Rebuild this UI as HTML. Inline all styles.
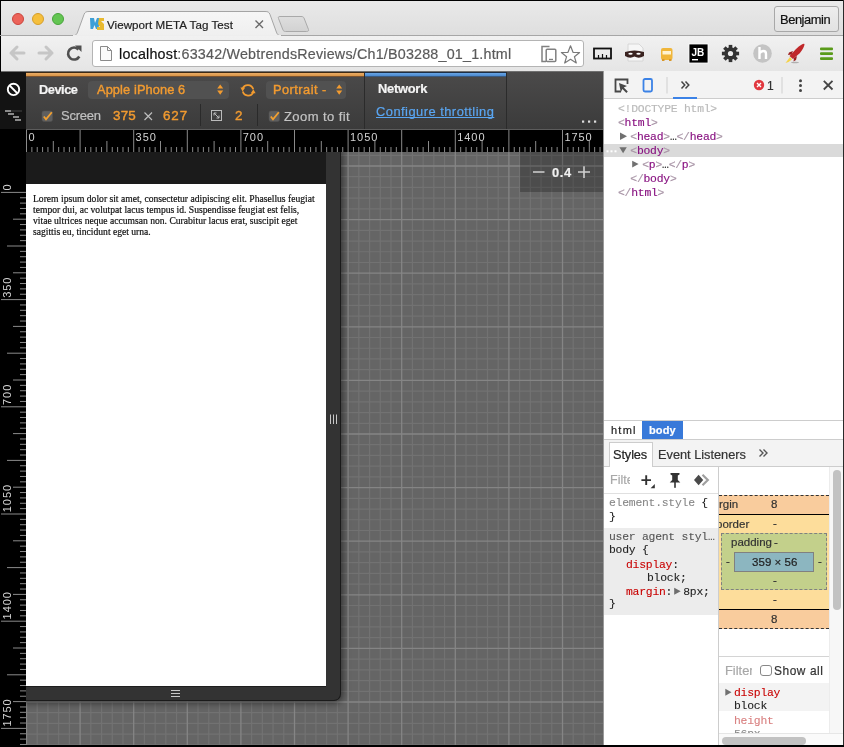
<!DOCTYPE html>
<html><head><meta charset="utf-8">
<style>
*{box-sizing:border-box;margin:0;padding:0}
html,body{width:844px;height:747px;overflow:hidden;background:#000;font-family:"Liberation Sans",sans-serif}
.a{position:absolute}
#tabstrip{left:1px;top:1px;width:842px;height:35px;background:linear-gradient(#e9e9e9,#dedede)}
#toolbar{left:1px;top:36px;width:842px;height:36px;background:linear-gradient(#f1f1f1,#e5e5e5);border-bottom:1px solid #707070}
.tl{width:12px;height:12px;border-radius:50%}
#url{left:92px;top:40px;width:492px;height:27px;background:#fff;border:1px solid #b4b4b4;border-radius:3px}
#devbar{left:26px;top:72px;width:577px;height:57px;background:linear-gradient(#4b4a4a,#3b3b3b)}
#leftstrip{left:0;top:72px;width:26px;height:57px;background:#131313}
#hruler{left:26px;top:129px;width:577px;height:23px;background:#000;border-top:1px solid #5a5a5a}
#vruler{left:0;top:129px;width:26px;height:617px;background:#000}
#canvas{left:26px;top:152px;width:578px;height:594px;background:#666}
#devtools{left:603px;top:71px;width:240px;height:675px;background:#fff;border-left:1px solid #888}
.mono{font-family:"Liberation Mono",monospace}
.nw{white-space:nowrap}
svg,div{will-change:transform}
body{-webkit-text-stroke-width:0.2px}
</style></head><body>
<!-- TAB STRIP -->
<div class="a" id="tabstrip"></div>
<svg class="a" style="left:0;top:0" width="844" height="72">
  <line x1="0" y1="35.5" x2="844" y2="35.5" stroke="#a6a6a6" stroke-width="1"/>
  <path d="M72 36 C76 36 77 34 78 31 L84 14.5 C85 12 86 11.5 89 11.5 L265 11.5 C268 11.5 269 12 270 14.5 L276 31 C277 34 278 36 282 36 Z" fill="url(#tabg)" stroke="#a4a4a4" stroke-width="1"/>
  <rect x="73" y="35" width="208" height="2" fill="#eeeeee"/>
  <defs>
    <linearGradient id="tabg" x1="0" y1="0" x2="0" y2="1"><stop offset="0" stop-color="#f6f6f6"/><stop offset="1" stop-color="#efefef"/></linearGradient>
    <linearGradient id="ntg" x1="0" y1="0" x2="0" y2="1"><stop offset="0" stop-color="#dedede"/><stop offset="1" stop-color="#d2d2d2"/></linearGradient>
  </defs>
  <path d="M280 16.5 L301 16.5 C303 16.5 303.5 17 304 18 L308.5 29.5 C309 31 308 31.5 306.5 31.5 L285.5 31.5 C284 31.5 283.5 31 283 30 L278.5 18.5 C278 17 278.5 16.5 280 16.5 Z" fill="url(#ntg)" stroke="#a9a9a9" stroke-width="1"/>
</svg>
<div class="a tl" style="left:12px;top:13px;background:#ec6359;border:1px solid #c9443c"></div>
<div class="a tl" style="left:32px;top:13px;background:#f5bf3c;border:1px solid #d49d2a"></div>
<div class="a tl" style="left:52px;top:13px;background:#63c552;border:1px solid #47a23b"></div>
<!-- favicon -->
<svg class="a" style="left:89px;top:17px" width="17" height="14">
  <path d="M1 1 L5 1 L6 6 L8 1 L11 1 L9.5 12 L7 12 L5.5 8 L4 12 L1.5 12 Z" fill="#3d9fd6"/>
  <path d="M10 1 L15 1 L15 4 L12 4 L15 7 L15 13 L8 13 L8 10 L11 10 L9 7 Z" fill="#e8b92f"/>
</svg>
<div class="a nw" style="left:107.2px;top:17.5px;font-size:11.6px;letter-spacing:0.05px;color:#222">Viewport META Tag Test</div>
<svg class="a" style="left:254px;top:19px" width="11" height="11"><path d="M1.5 1.5 L9 9 M9 1.5 L1.5 9" stroke="#6a6a6a" stroke-width="1.4"/></svg>
<div class="a" style="left:774px;top:6px;width:65px;height:26px;border:1px solid #a8a8a8;border-radius:3px;background:linear-gradient(#ededed,#e2e2e2)"></div>
<div class="a nw" style="left:780.4px;top:11.9px;font-size:12.9px;letter-spacing:-0.44px;color:#111">Benjamin</div>
<!-- TOOLBAR -->
<div class="a" id="toolbar"></div>
<svg class="a" style="left:0;top:36px" width="90" height="35">
  <path d="M11 17 L24 17 M17 11 L11 17 L17 23" stroke="#c6c6c6" stroke-width="3" fill="none" stroke-linecap="round" stroke-linejoin="round"/>
  <path d="M39 17 L52 17 M46 11 L52 17 L46 23" stroke="#c6c6c6" stroke-width="3" fill="none" stroke-linecap="round" stroke-linejoin="round"/>
  <path d="M78.5 13.5 A6 6 0 1 0 79.3 20.5" stroke="#505050" stroke-width="2.6" fill="none"/>
  <path d="M75 9.5 L81.5 9.5 L81.5 16 Z" fill="#505050"/>
</svg>
<div class="a" id="url"></div>
<svg class="a" style="left:98px;top:45px" width="16" height="17">
  <path d="M2.5 1.5 L9.5 1.5 L13.5 5.5 L13.5 15.5 L2.5 15.5 Z" fill="#fafafa" stroke="#8a8a8a" stroke-width="1"/>
  <path d="M9.5 1.5 L9.5 5.5 L13.5 5.5" fill="none" stroke="#8a8a8a" stroke-width="1"/>
</svg>
<div class="a" style="left:118.6px;top:46px;font-size:14.3px;letter-spacing:0.21px;color:#5a5a5a;white-space:nowrap"><span style="color:#111">localhost</span>:63342/WebtrendsReviews/Ch1/B03288_01_1.html</div>
<svg class="a" style="left:538px;top:44px" width="45" height="20">
  <path d="M11.5 2.5 L4 2.5 L4 17.5 L8 17.5" fill="none" stroke="#808080" stroke-width="1.5"/>
  <rect x="8.2" y="5.2" width="9.6" height="12.3" rx="1" fill="none" stroke="#808080" stroke-width="1.5"/>
  <rect x="11" y="14.8" width="4" height="1.2" fill="#808080"/>
  <path d="M32.5 1.8 L35 8.3 L41.6 8.5 L36.4 12.7 L38.3 19 L32.5 15.3 L26.7 19 L28.6 12.7 L23.4 8.5 L30 8.3 Z" fill="none" stroke="#7a7a7a" stroke-width="1.2" stroke-linejoin="round"/>
</svg>
<!-- extension icons -->
<svg class="a" style="left:590px;top:40px" width="254" height="30">
  <!-- ruler -->
  <rect x="4" y="8.5" width="17" height="10" fill="none" stroke="#111" stroke-width="1.8"/>
  <path d="M8.5 18 L8.5 15 M12.5 18 L12.5 14 M16.5 18 L16.5 15" stroke="#111" stroke-width="1.2"/>
  <!-- mask page -->
  <path d="M38 4 L49 4 L53 8 L53 21 L38 21 Z" fill="#f6f6f6" stroke="#d0d0d0" stroke-width="0.8"/>
  <path d="M35 12 Q44.5 9 54 12 L54 16 Q49 19 44.5 16.5 Q40 19 35 16 Z" fill="#3a2320"/>
  <ellipse cx="40.5" cy="13.8" rx="2.2" ry="1" fill="#fff"/>
  <ellipse cx="48.5" cy="13.8" rx="2.2" ry="1" fill="#fff"/>
  <!-- bus -->
  <rect x="71" y="8" width="11.5" height="12" rx="2" fill="#f0b63a"/>
  <rect x="72.5" y="11" width="8.5" height="3.5" fill="#fff3d0"/>
  <rect x="72" y="19" width="2.5" height="2" fill="#d9982a"/>
  <rect x="79" y="19" width="2.5" height="2" fill="#d9982a"/>
  <!-- JB -->
  <rect x="99" y="4" width="19" height="19" fill="#000" stroke="#fff" stroke-width="0.8"/>
  <text x="101.5" y="15.5" font-family="Liberation Sans" font-weight="bold" font-size="10" fill="#fff">JB</text>
  <rect x="102" y="19" width="6" height="1.4" fill="#fff"/>
  <!-- gear -->
  <g transform="translate(140.5 13.5)" fill="#333">
    <circle r="6.2"/>
    <rect x="-1.8" y="-8.6" width="3.6" height="17.2"/>
    <rect x="-1.8" y="-8.6" width="3.6" height="17.2" transform="rotate(45)"/>
    <rect x="-1.8" y="-8.6" width="3.6" height="17.2" transform="rotate(90)"/>
    <rect x="-1.8" y="-8.6" width="3.6" height="17.2" transform="rotate(135)"/>
    <circle r="2.6" fill="#ececec"/>
  </g>
  <!-- h -->
  <circle cx="172.5" cy="13.5" r="9.3" fill="#c4c4c4"/>
  <path d="M169.5 7 L169.5 19 M169.5 13.5 Q171 11 173.5 11 Q176 11 176 14 L176 19" stroke="#fff" stroke-width="2.4" fill="none"/>
  <!-- rocket -->
  <path d="M211 5 Q214 3 214.5 4 Q214.5 7 210 13 L203 19 L199.5 16 L206 9 Q209 6 211 5 Z" fill="#c0282a"/>
  <path d="M203 11 L199 12.5 L198 15 L201.5 14.5 Z M207 16 L206 20 L203.5 21.5 L204 18 Z" fill="#9c1e20"/>
  <path d="M200 17 L197 21 L195.5 23 L198.5 22 L202 19.5 Z" fill="#f5d34a"/>
  <ellipse cx="205" cy="22.5" rx="4" ry="0.8" fill="#8a8a8a" opacity="0.6"/>
  <!-- hamburger -->
  <rect x="230" y="7.5" width="13" height="2.8" rx="1" fill="#5a9b1a"/>
  <rect x="230" y="12.3" width="13" height="2.8" rx="1" fill="#5a9b1a"/>
  <rect x="230" y="17.2" width="13" height="2.8" rx="1" fill="#5a9b1a"/>
</svg>
<div class="a" id="leftstrip"></div>
<div class="a" id="devbar"></div>
<div class="a" style="left:26px;top:72px;width:338px;height:1px;background:#3d2a15"></div>
<div class="a" style="left:26px;top:73px;width:338px;height:3px;background:linear-gradient(#eaad68,#d99445)"></div>
<div class="a" style="left:26px;top:76px;width:338px;height:1px;background:#7a5230"></div>
<div class="a" style="left:365px;top:72px;width:141px;height:1px;background:#1d2f45"></div>
<div class="a" style="left:365px;top:73px;width:141px;height:3px;background:linear-gradient(#6aa6e6,#4a89cf)"></div>
<div class="a" style="left:365px;top:76px;width:141px;height:1px;background:#3a5a80"></div>
<div class="a" style="left:364px;top:72px;width:1px;height:57px;background:#2b2b2b"></div>
<div class="a" style="left:506px;top:72px;width:1px;height:57px;background:#2b2b2b"></div>
<svg class="a" style="left:0;top:72px" width="26" height="57">
  <circle cx="13.5" cy="17.4" r="5.7" fill="none" stroke="#fff" stroke-width="1.9"/>
  <path d="M9.6 13.5 L17.4 21.3" stroke="#fff" stroke-width="1.9"/>
  <rect x="11" y="38.2" width="11" height="1.6" fill="#333"/>
  <rect x="5" y="38.2" width="6" height="1.6" fill="#a8a8a8"/>
  <rect x="8" y="41.2" width="6" height="1.6" fill="#a8a8a8"/>
  <rect x="13" y="44.2" width="6" height="1.6" fill="#a8a8a8"/>
  <rect x="15" y="47.2" width="6" height="1.6" fill="#a8a8a8"/>
</svg>
<div class="a nw" style="left:38.5px;top:81.9px;font-size:12.8px;letter-spacing:-0.47px;font-weight:bold;color:#f4f4f4">Device</div>
<div class="a" style="left:88px;top:81px;width:141px;height:17.5px;border-radius:4px;background:#515151"></div>
<div class="a nw" style="left:97.2px;top:81.9px;font-size:12.8px;letter-spacing:0.11px;color:#f29b30;-webkit-text-stroke:0.4px #f29b30">Apple iPhone 6</div>
<svg class="a" style="left:215px;top:84px" width="10" height="13">
  <path d="M2.2 4.6 L5.2 0.6 L8.2 4.6 Z M2.2 6.5 L5.2 10.8 L8.2 6.5 Z" fill="#f29b30"/>
</svg>
<svg class="a" style="left:240px;top:83px" width="16" height="15">
  <path d="M2.6 5.8 A5.6 5.6 0 0 1 13.2 6.2" fill="none" stroke="#f29b30" stroke-width="1.8"/>
  <path d="M13.4 9 A5.6 5.6 0 0 1 2.8 8.6" fill="none" stroke="#f29b30" stroke-width="1.8"/>
  <path d="M0.4 4.6 L5.2 4.6 L2.6 8.6 Z" fill="#f29b30"/>
  <path d="M15.6 10.2 L10.8 10.2 L13.4 6.2 Z" fill="#f29b30"/>
</svg>
<div class="a" style="left:265.5px;top:81px;width:80px;height:17.5px;border-radius:4px;background:#515151"></div>
<div class="a nw" style="left:273.4px;top:82px;font-size:12.8px;letter-spacing:0.47px;color:#f29b30;-webkit-text-stroke:0.4px #f29b30">Portrait -</div>
<svg class="a" style="left:334px;top:84px" width="10" height="13">
  <path d="M2.2 4.6 L5.2 0.6 L8.2 4.6 Z M2.2 6.5 L5.2 10.8 L8.2 6.5 Z" fill="#f29b30"/>
</svg>
<!-- row 2 -->
<svg class="a" style="left:41px;top:110px" width="13" height="13">
  <rect x="1" y="1" width="10.5" height="10.5" rx="2" fill="#5f5f5f" stroke="#555" stroke-width="0.5"/>
  <path d="M2.8 6.5 L5 9.3 L10.8 2.3" fill="none" stroke="#f2a030" stroke-width="1.8"/>
</svg>
<div class="a nw" style="left:61px;top:107.9px;font-size:13px;letter-spacing:-0.23px;color:#c0c0c0;-webkit-text-stroke:0.2px #c0c0c0">Screen</div>
<div class="a nw" style="left:113.2px;top:108px;font-size:13.4px;letter-spacing:0.2px;color:#f29b30;-webkit-text-stroke:0.4px #f29b30">375</div>
<svg class="a" style="left:143px;top:111px" width="11" height="11"><path d="M1.5 1.5 L9 9 M9 1.5 L1.5 9" stroke="#bdbdbd" stroke-width="1.2"/></svg>
<div class="a nw" style="left:162.8px;top:108px;font-size:13.4px;letter-spacing:0.9px;color:#f29b30;-webkit-text-stroke:0.4px #f29b30">627</div>
<div class="a" style="left:200px;top:104px;width:1px;height:22px;background:#2a2a2a"></div>
<svg class="a" style="left:210px;top:109px" width="14" height="13">
  <rect x="1.5" y="1.5" width="10" height="10" fill="none" stroke="#bbb" stroke-width="1"/>
  <path d="M4 4 L9 9 M4 4 L4 6.5 M4 4 L6.5 4 M9 9 L9 6.5 M9 9 L6.5 9" stroke="#bbb" stroke-width="1"/>
</svg>
<div class="a nw" style="left:234.5px;top:108px;font-size:13.4px;color:#f29b30;-webkit-text-stroke:0.4px #f29b30">2</div>
<div class="a" style="left:257px;top:104px;width:1px;height:22px;background:#2a2a2a"></div>
<svg class="a" style="left:268px;top:110px" width="13" height="13">
  <rect x="1" y="1" width="10.5" height="10.5" rx="2" fill="#5f5f5f" stroke="#555" stroke-width="0.5"/>
  <path d="M2.8 6.5 L5 9.3 L10.8 2.3" fill="none" stroke="#f2a030" stroke-width="1.8"/>
</svg>
<div class="a nw" style="left:284.2px;top:108.9px;font-size:13px;letter-spacing:0.42px;color:#c4c4c4;-webkit-text-stroke:0.2px #c4c4c4">Zoom to fit</div>
<div class="a nw" style="left:378.2px;top:81px;font-size:12.9px;letter-spacing:-0.26px;font-weight:bold;color:#f4f4f4">Network</div>
<div class="a nw" style="left:375.9px;top:103.8px;font-size:12.9px;letter-spacing:0.47px;color:#5aa6f2;text-decoration:underline;text-decoration-skip-ink:none">Configure throttling</div>
<svg class="a" style="left:580px;top:119px" width="20" height="5">
  <rect x="2" y="1.5" width="2.2" height="2.2" fill="#ddd"/>
  <rect x="8" y="1.5" width="2.2" height="2.2" fill="#ddd"/>
  <rect x="14" y="1.5" width="2.2" height="2.2" fill="#ddd"/>
</svg>


<svg class="a" style="left:26px;top:152px" width="578" height="594"><rect width="578" height="594" fill="#656565"/><path d="M11.22 0V594M21.94 0V594M32.66 0V594M43.38 0V594M64.82 0V594M75.54 0V594M86.26 0V594M96.98 0V594M118.42 0V594M129.14 0V594M139.86 0V594M150.58 0V594M172.02 0V594M182.74 0V594M193.46 0V594M204.18 0V594M225.62 0V594M236.34 0V594M247.06 0V594M257.78 0V594M279.22 0V594M289.94 0V594M300.66 0V594M311.38 0V594M332.82 0V594M343.54 0V594M354.26 0V594M364.98 0V594M386.42 0V594M397.14 0V594M407.86 0V594M418.58 0V594M440.02 0V594M450.74 0V594M461.46 0V594M472.18 0V594M493.62 0V594M504.34 0V594M515.06 0V594M525.78 0V594M547.22 0V594M557.94 0V594M568.66 0V594M0 3.28H578M0 24.72H578M0 35.44H578M0 46.16H578M0 56.88H578M0 78.32H578M0 89.04H578M0 99.76H578M0 110.48H578M0 131.92H578M0 142.64H578M0 153.36H578M0 164.08H578M0 185.52H578M0 196.24H578M0 206.96H578M0 217.68H578M0 239.12H578M0 249.84H578M0 260.56H578M0 271.28H578M0 292.72H578M0 303.44H578M0 314.16H578M0 324.88H578M0 346.32H578M0 357.04H578M0 367.76H578M0 378.48H578M0 399.92H578M0 410.64H578M0 421.36H578M0 432.08H578M0 453.52H578M0 464.24H578M0 474.96H578M0 485.68H578M0 507.12H578M0 517.84H578M0 528.56H578M0 539.28H578M0 560.72H578M0 571.44H578M0 582.16H578M0 592.88H578" stroke="#727272" stroke-width="1.2" fill="none"/><path d="M0.50 0V594M54.10 0V594M107.70 0V594M161.30 0V594M214.90 0V594M268.50 0V594M322.10 0V594M375.70 0V594M429.30 0V594M482.90 0V594M536.50 0V594M0 14.00H578M0 67.60H578M0 121.20H578M0 174.80H578M0 228.40H578M0 282.00H578M0 335.60H578M0 389.20H578M0 442.80H578M0 496.40H578M0 550.00H578" stroke="#858585" stroke-width="1.3" fill="none"/></svg>
<div class="a" style="left:-20px;top:152px;width:360px;height:548px;background:#333;border-radius:0 0 6px 0;box-shadow:0 0 0 1px #1a1a1a,1px 1px 7px 2px rgba(0,0,0,0.5)"></div>
<div class="a" style="left:0;top:152px;width:326px;height:32px;background:#1b1b1b"></div>
<div class="a" style="left:0;top:184px;width:326px;height:502px;background:#fff"></div>
<div class="a" style="left:0;top:686px;width:326px;height:1px;background:#1e1e1e"></div>
<svg class="a" style="left:168px;top:688px" width="16" height="10"><path d="M3 2.5H12M3 5.5H12M3 8.5H12" stroke="#c8c8c8" stroke-width="1"/></svg>
<svg class="a" style="left:328px;top:413px" width="11" height="13"><path d="M2.5 1.5V11M5.5 1.5V11M8.5 1.5V11" stroke="#c8c8c8" stroke-width="1"/></svg>
<div class="a" style="left:32.5px;top:193px;font-family:'Liberation Serif',serif;font-size:9.6px;line-height:11.05px;color:#111;white-space:nowrap">Lorem ipsum dolor sit amet, consectetur adipiscing elit. Phasellus feugiat<br>tempor dui, ac volutpat lacus tempus id. Suspendisse feugiat est felis,<br>vitae ultrices neque accumsan non. Curabitur lacus erat, suscipit eget<br>sagittis eu, tincidunt eget urna.</div>
<div class="a" style="left:520px;top:152px;width:84px;height:40px;background:rgba(0,0,0,0.24)"></div>
<svg class="a" style="left:530px;top:163px" width="64" height="18"><path d="M3 9H14.5M48 9H60M54 3.3V15" stroke="#cfcfcf" stroke-width="1.6"/></svg>
<div class="a nw" style="left:551.5px;top:165px;font-size:12.9px;letter-spacing:0.65px;font-weight:bold;color:#f0f0f0">0.4</div>
<div class="a" style="left:26px;top:129px;width:577px;height:23px;background:#000;border-top:1px solid #5c5c5c"></div>
<svg class="a" style="left:0;top:0" width="604" height="152"><path d="M26.50 130V152M31.86 147V152M37.22 147V152M42.58 147V152M47.94 147V152M53.30 141V152M58.66 147V152M64.02 147V152M69.38 147V152M74.74 147V152M80.10 130V152M85.46 147V152M90.82 147V152M96.18 147V152M101.54 147V152M106.90 141V152M112.26 147V152M117.62 147V152M122.98 147V152M128.34 147V152M133.70 130V152M139.06 147V152M144.42 147V152M149.78 147V152M155.14 147V152M160.50 141V152M165.86 147V152M171.22 147V152M176.58 147V152M181.94 147V152M187.30 130V152M192.66 147V152M198.02 147V152M203.38 147V152M208.74 147V152M214.10 141V152M219.46 147V152M224.82 147V152M230.18 147V152M235.54 147V152M240.90 130V152M246.26 147V152M251.62 147V152M256.98 147V152M262.34 147V152M267.70 141V152M273.06 147V152M278.42 147V152M283.78 147V152M289.14 147V152M294.50 130V152M299.86 147V152M305.22 147V152M310.58 147V152M315.94 147V152M321.30 141V152M326.66 147V152M332.02 147V152M337.38 147V152M342.74 147V152M348.10 130V152M353.46 147V152M358.82 147V152M364.18 147V152M369.54 147V152M374.90 141V152M380.26 147V152M385.62 147V152M390.98 147V152M396.34 147V152M401.70 130V152M407.06 147V152M412.42 147V152M417.78 147V152M423.14 147V152M428.50 141V152M433.86 147V152M439.22 147V152M444.58 147V152M449.94 147V152M455.30 130V152M460.66 147V152M466.02 147V152M471.38 147V152M476.74 147V152M482.10 141V152M487.46 147V152M492.82 147V152M498.18 147V152M503.54 147V152M508.90 130V152M514.26 147V152M519.62 147V152M524.98 147V152M530.34 147V152M535.70 141V152M541.06 147V152M546.42 147V152M551.78 147V152M557.14 147V152M562.50 130V152M567.86 147V152M573.22 147V152M578.58 147V152M583.94 147V152M589.30 141V152M594.66 147V152M600.02 147V152" stroke="#8a8a8a" stroke-width="1" fill="none"/><text x="28.40" y="141" font-family="Liberation Sans" font-size="11" letter-spacing="0.95" fill="#d4d4d4">0</text><text x="135.60" y="141" font-family="Liberation Sans" font-size="11" letter-spacing="0.95" fill="#d4d4d4">350</text><text x="242.80" y="141" font-family="Liberation Sans" font-size="11" letter-spacing="0.95" fill="#d4d4d4">700</text><text x="350.00" y="141" font-family="Liberation Sans" font-size="11" letter-spacing="0.95" fill="#d4d4d4">1050</text><text x="457.20" y="141" font-family="Liberation Sans" font-size="11" letter-spacing="0.95" fill="#d4d4d4">1400</text><text x="564.40" y="141" font-family="Liberation Sans" font-size="11" letter-spacing="0.95" fill="#d4d4d4">1750</text></svg>
<div class="a" style="left:0;top:129px;width:26px;height:617px;background:#000"></div>
<svg class="a" style="left:0;top:0" width="26" height="746"><path d="M1 192.40H26M20 197.76H26M20 203.12H26M20 208.48H26M20 213.84H26M13 219.20H26M20 224.56H26M20 229.92H26M20 235.28H26M20 240.64H26M7 246.00H26M20 251.36H26M20 256.72H26M20 262.08H26M20 267.44H26M13 272.80H26M20 278.16H26M20 283.52H26M20 288.88H26M20 294.24H26M1 299.60H26M20 304.96H26M20 310.32H26M20 315.68H26M20 321.04H26M13 326.40H26M20 331.76H26M20 337.12H26M20 342.48H26M20 347.84H26M7 353.20H26M20 358.56H26M20 363.92H26M20 369.28H26M20 374.64H26M13 380.00H26M20 385.36H26M20 390.72H26M20 396.08H26M20 401.44H26M1 406.80H26M20 412.16H26M20 417.52H26M20 422.88H26M20 428.24H26M13 433.60H26M20 438.96H26M20 444.32H26M20 449.68H26M20 455.04H26M7 460.40H26M20 465.76H26M20 471.12H26M20 476.48H26M20 481.84H26M13 487.20H26M20 492.56H26M20 497.92H26M20 503.28H26M20 508.64H26M1 514.00H26M20 519.36H26M20 524.72H26M20 530.08H26M20 535.44H26M13 540.80H26M20 546.16H26M20 551.52H26M20 556.88H26M20 562.24H26M7 567.60H26M20 572.96H26M20 578.32H26M20 583.68H26M20 589.04H26M13 594.40H26M20 599.76H26M20 605.12H26M20 610.48H26M20 615.84H26M1 621.20H26M20 626.56H26M20 631.92H26M20 637.28H26M20 642.64H26M13 648.00H26M20 653.36H26M20 658.72H26M20 664.08H26M20 669.44H26M7 674.80H26M20 680.16H26M20 685.52H26M20 690.88H26M20 696.24H26M13 701.60H26M20 706.96H26M20 712.32H26M20 717.68H26M20 723.04H26M1 728.40H26M20 733.76H26M20 739.12H26M20 744.48H26" stroke="#8a8a8a" stroke-width="1" fill="none"/><text transform="translate(11.2 190.60) rotate(-90)" font-family="Liberation Sans" font-size="11" letter-spacing="0.95" fill="#d4d4d4">0</text><text transform="translate(11.2 297.80) rotate(-90)" font-family="Liberation Sans" font-size="11" letter-spacing="0.95" fill="#d4d4d4">350</text><text transform="translate(11.2 405.00) rotate(-90)" font-family="Liberation Sans" font-size="11" letter-spacing="0.95" fill="#d4d4d4">700</text><text transform="translate(11.2 512.20) rotate(-90)" font-family="Liberation Sans" font-size="11" letter-spacing="0.95" fill="#d4d4d4">1050</text><text transform="translate(11.2 619.40) rotate(-90)" font-family="Liberation Sans" font-size="11" letter-spacing="0.95" fill="#d4d4d4">1400</text><text transform="translate(11.2 726.60) rotate(-90)" font-family="Liberation Sans" font-size="11" letter-spacing="0.95" fill="#d4d4d4">1750</text></svg>
<div class="a" style="left:603px;top:71px;width:241px;height:676px;background:#fff"></div>
<div class="a" style="left:603px;top:71px;width:1px;height:676px;background:#9a9a9a"></div>
<div class="a" style="left:843px;top:0;width:1px;height:747px;background:#2a2a2a"></div>
<!-- top toolbar -->
<div class="a" style="left:604px;top:71px;width:239px;height:28px;background:#f3f3f3;border-bottom:1px solid #cdcdcd"></div>
<svg class="a" style="left:604px;top:71px" width="239" height="28">
  <path d="M17 20.5 L11.5 20.5 L11.5 8.5 L23.5 8.5 L23.5 13" fill="none" stroke="#474747" stroke-width="1.8"/>
  <path d="M15 12 L23 15 L19.8 16.6 L23.8 20.6 L22.4 22 L18.4 18 L16.8 21.2 Z" fill="#474747"/>
  <rect x="39.5" y="8" width="8.5" height="12.5" rx="1.5" fill="none" stroke="#3b82e6" stroke-width="1.8"/>
  <rect x="62.5" y="6" width="1" height="16.5" fill="#d0d0d0"/>
  <path d="M77.5 10.5 L80.8 14 L77.5 17.5 M81.5 10.5 L84.8 14 L81.5 17.5" fill="none" stroke="#444" stroke-width="1.5"/>
  <rect x="69" y="26" width="24" height="2" fill="#3b82e6"/>
  <circle cx="155" cy="14" r="5.2" fill="#e1383f"/>
  <path d="M153 12 L157 16 M157 12 L153 16" stroke="#fff" stroke-width="1.4"/>
  <rect x="177.5" y="6" width="1" height="16.5" fill="#d0d0d0"/>
  <circle cx="196.5" cy="9.7" r="1.5" fill="#444"/>
  <circle cx="196.5" cy="14.5" r="1.5" fill="#444"/>
  <circle cx="196.5" cy="19.4" r="1.5" fill="#444"/>
  <path d="M219.8 9.8 L228.5 18.5 M228.5 9.8 L219.8 18.5" stroke="#444" stroke-width="1.8"/>
</svg>
<div class="a nw" style="left:767px;top:79px;font-size:12px;color:#333">1</div>
<!-- DOM tree -->
<div class="a" style="left:604px;top:144px;width:239px;height:13px;background:#dadada"></div>
<svg class="a" style="left:0;top:0" width="844" height="200">
  <rect x="606.5" y="150.3" width="2" height="2" fill="#fff"/>
  <rect x="610.5" y="150.3" width="2" height="2" fill="#fff"/>
  <rect x="614.5" y="150.3" width="2" height="2" fill="#fff"/>
  <path d="M619.4 147.3 L626.8 147.3 L623.1 153.3 Z" fill="#707070"/>
  <path d="M620 132.4 L627 136.2 L620 140 Z" fill="#707070"/>
  <path d="M632.2 160.7 L638.6 164.1 L632.2 167.5 Z" fill="#707070"/>
</svg>
<div class="a mono nw" style="left:618px;top:101.5px;font-size:11.4px;letter-spacing:-0.24px;line-height:14px;color:#881280;-webkit-text-stroke:0.15px">
<span style="color:#bababa">&lt;!DOCTYPE html&gt;</span><br>
<span style="color:#a894a6">&lt;</span>html<span style="color:#a894a6">&gt;</span><br>
<span style="margin-left:12.3px"><span style="color:#a894a6">&lt;</span>head<span style="color:#a894a6">&gt;</span><span style="color:#333">…</span><span style="color:#a894a6">&lt;/</span>head<span style="color:#a894a6">&gt;</span></span><br>
<span style="margin-left:12.3px"><span style="color:#a894a6">&lt;</span>body<span style="color:#a894a6">&gt;</span></span><br>
<span style="margin-left:24.2px"><span style="color:#a894a6">&lt;</span>p<span style="color:#a894a6">&gt;</span><span style="color:#333">…</span><span style="color:#a894a6">&lt;/</span>p<span style="color:#a894a6">&gt;</span></span><br>
<span style="margin-left:12.3px"><span style="color:#a894a6">&lt;/</span>body<span style="color:#a894a6">&gt;</span></span><br>
<span style="color:#a894a6">&lt;/</span>html<span style="color:#a894a6">&gt;</span>
</div>
<!-- breadcrumbs -->
<div class="a" style="left:604px;top:420px;width:239px;height:1px;background:#cdcdcd"></div>
<div class="a nw" style="left:611px;top:423.7px;font-size:11px;letter-spacing:1.25px;color:#222">html</div>
<div class="a" style="left:642px;top:421px;width:41px;height:18px;background:#3879d9"></div>
<div class="a nw" style="left:649px;top:423.7px;font-size:11px;letter-spacing:0.15px;font-weight:bold;color:#fff">body</div>
<!-- tabs -->
<div class="a" style="left:604px;top:439px;width:239px;height:28px;background:#f3f3f3;border-top:1px solid #cdcdcd;border-bottom:1px solid #cdcdcd"></div>
<div class="a" style="left:609px;top:442px;width:44px;height:25px;background:#fff;border:1px solid #cdcdcd;border-bottom:none"></div>
<div class="a nw" style="left:613.2px;top:446.8px;font-size:12.8px;letter-spacing:-0.12px;color:#222">Styles</div>
<div class="a nw" style="left:657.5px;top:446.8px;font-size:12.8px;letter-spacing:-0.02px;color:#333">Event Listeners</div>
<svg class="a" style="left:756px;top:446px" width="14" height="14"><path d="M3.5 3.5 L7 7 L3.5 10.5 M7.5 3.5 L11 7 L7.5 10.5" fill="none" stroke="#555" stroke-width="1.4"/></svg>
<!-- styles pane -->
<div class="a" style="left:718px;top:467px;width:1px;height:278px;background:#cdcdcd"></div>
<div class="a" style="left:604px;top:493px;width:114px;height:1px;background:#e0e0e0"></div>
<div class="a nw" style="left:609.5px;top:473px;font-size:12.5px;color:#a8a8a8;width:20px;overflow:hidden">Filter</div>
<svg class="a" style="left:638px;top:470px" width="76" height="20">
  <path d="M8.2 5.3 L8.2 14.9 M3.4 10.1 L13 10.1" stroke="#333" stroke-width="1.9"/>
  <path d="M16.8 18.2 L16.8 14 L12.6 18.2 Z" fill="#333"/>
  <path d="M32.5 3 L41.5 3 L41.5 4.6 L39.8 5.4 L39.8 10 L42.3 12.6 L31.7 12.6 L34.2 10 L34.2 5.4 L32.5 4.6 Z" fill="#333"/>
  <rect x="36.2" y="12" width="1.6" height="5.8" fill="#333"/>
  <path d="M64.5 4.8 L69.8 10 L64.5 15.2" fill="none" stroke="#a0a0a0" stroke-width="2.2"/>
  <path d="M56 10 L60.6 4.8 L65.2 10 L60.6 15.2 Z" fill="#4a4a4a"/>
</svg>
<div class="a mono nw" style="left:608.5px;top:496px;font-size:11.4px;letter-spacing:-0.24px;-webkit-text-stroke:0.1px;line-height:14px;color:#222"><span style="color:#888">element.style</span> {<br>}</div>
<div class="a" style="left:604px;top:528px;width:114px;height:87px;background:#ececec"></div>
<div class="a mono nw" style="left:608.5px;top:531.2px;font-size:11.4px;letter-spacing:-0.24px;-webkit-text-stroke:0.1px;line-height:13.2px;color:#222"><span style="color:#555">user agent styl…</span><br>body {</div>
<div class="a mono nw" style="left:626px;top:559.3px;font-size:11.4px;letter-spacing:-0.24px;-webkit-text-stroke:0.1px;line-height:13.3px;color:#222"><span style="color:#c80000">display</span>:<br><span style="margin-left:21px">block;</span><br><span style="color:#c80000">margin</span>:<span style="margin-left:11px">8px;</span></div>
<svg class="a" style="left:672px;top:586px" width="10" height="10"><path d="M2.2 1.8 L8.7 5.3 L2.2 8.8 Z" fill="#6e6e6e"/></svg>
<div class="a mono nw" style="left:608.5px;top:597.7px;font-size:11.4px;letter-spacing:-0.24px;-webkit-text-stroke:0.1px;color:#222">}</div>
<!-- box model -->
<div class="a" style="left:719px;top:495px;width:110px;height:134px;background:#f9cc9d;border-top:1px dashed #333;border-bottom:1px dashed #333"></div>
<div class="a" style="left:719px;top:514px;width:110px;height:96px;background:#fddd9b;border-top:1.5px solid #000;border-bottom:1.5px solid #000"></div>
<div class="a" style="left:721px;top:533px;width:106px;height:57px;background:#c3d08b;border:1px dashed #808080"></div>
<div class="a" style="left:734px;top:552px;width:80px;height:20px;background:#8cb6c0;border:1px solid #808080"></div>
<div class="a" style="left:719px;top:495px;width:110px;height:134px;overflow:hidden">
<div class="a nw" style="left:-16.5px;top:3.3px;font-size:11.5px;color:#333">margin</div>
<div class="a nw" style="left:-3.5px;top:23px;font-size:11.5px;color:#333">border</div>
</div>
<div class="a nw" style="left:771px;top:498.3px;font-size:11.5px;color:#333">8</div>
<div class="a nw" style="left:772.5px;top:517px;font-size:11.5px;color:#333">-</div>
<div class="a nw" style="left:730.5px;top:536px;font-size:11.5px;color:#333">padding</div>
<div class="a nw" style="left:773.5px;top:535.5px;font-size:11.5px;color:#333">-</div>
<div class="a nw" style="left:726px;top:555px;font-size:11.5px;color:#333">-</div>
<div class="a nw" style="left:818px;top:555px;font-size:11.5px;color:#333">-</div>
<div class="a nw" style="left:752px;top:556px;font-size:11.5px;letter-spacing:0.05px;color:#222">359 × 56</div>
<div class="a nw" style="left:772.5px;top:574px;font-size:11.5px;color:#333">-</div>
<div class="a nw" style="left:772.5px;top:593px;font-size:11.5px;color:#333">-</div>
<div class="a nw" style="left:771px;top:613px;font-size:11.5px;color:#333">8</div>
<!-- scrollbar -->
<div class="a" style="left:829px;top:467px;width:14px;height:278px;background:#f7f7f7;border-left:1px solid #ececec"></div>
<div class="a" style="left:833px;top:470px;width:7.5px;height:140px;background:#c2c2c2;border-radius:4px"></div>
<!-- computed -->
<div class="a" style="left:719px;top:656px;width:110px;height:1px;background:#d4d4d4"></div>
<div class="a nw" style="left:724.5px;top:663px;font-size:12.9px;color:#a8a8a8;width:27px;overflow:hidden">Filter</div>
<div class="a" style="left:759.5px;top:665px;width:11.5px;height:11px;border:1px solid #888;border-radius:3px;background:#fff"></div>
<div class="a nw" style="left:773.8px;top:663.6px;font-size:11.9px;letter-spacing:0.57px;color:#333">Show all</div>
<div class="a" style="left:719px;top:683px;width:110px;height:28px;background:#f3f3f3"></div>
<svg class="a" style="left:723px;top:686px" width="12" height="12"><path d="M2.3 2.7 L8.5 6.2 L2.3 9.8 Z" fill="#707070"/></svg>
<div class="a mono nw" style="left:734px;top:686.5px;font-size:11.4px;letter-spacing:-0.24px;-webkit-text-stroke:0.1px;line-height:12.5px;color:#222"><span style="color:#c80000">display</span><br>block</div>
<div class="a mono nw" style="left:734px;top:714.5px;font-size:11.4px;letter-spacing:-0.24px;-webkit-text-stroke:0.1px;line-height:12.7px;color:#222"><span style="color:#d98080">height</span><br><span style="color:#8a8a8a">56px</span></div>
<div class="a" style="left:719px;top:733px;width:124px;height:13px;background:#fafafa;border-top:1px solid #e6e6e6"></div>
<div class="a" style="left:722px;top:737px;width:84px;height:7.5px;background:#c2c2c2;border-radius:4px"></div>
<div class="a" style="left:0;top:745px;width:844px;height:2px;background:#000"></div>
</body></html>
